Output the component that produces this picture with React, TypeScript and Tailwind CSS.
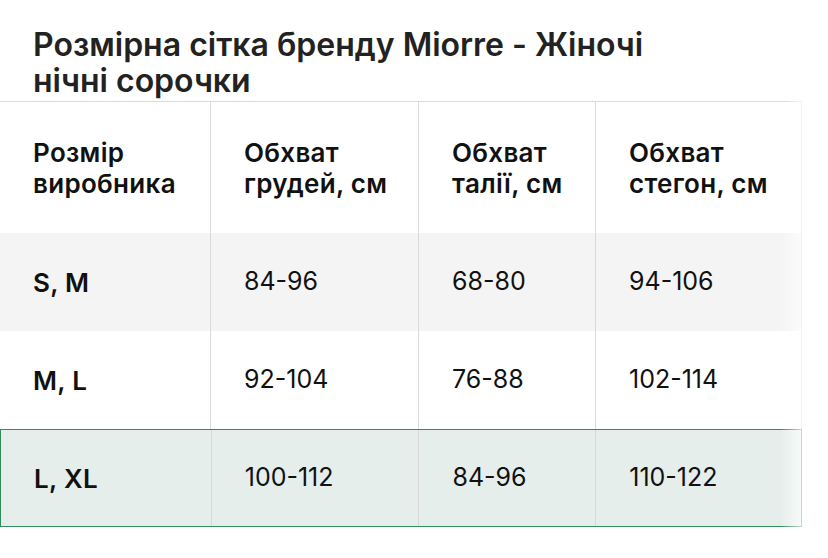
import React from "react"

const head = [
  ["Розмір", "виробника"],
  ["Обхват", "грудей, см"],
  ["Обхват", "талії, см"],
  ["Обхват", "стегон, см"],
]

const rows = [
  ["S, M", "84-96", "68-80", "94-106"],
  ["M, L", "92-104", "76-88", "102-114"],
  ["L, XL", "100-112", "84-96", "110-122"],
]

const widths = ["w-[211px]", "w-[208px]", "w-[177px]", "w-[205px]"]

export default function App() {
  return (
    <div className="min-h-[558px] w-[828px] bg-white text-[#111] font-['Inter','Noto_Sans',sans-serif]">
      <h1 className="w-[740px] px-[33px] pt-[27px] text-[32px] font-semibold leading-[36px] text-[#222]">
        Розмірна сітка бренду Miorre - Жіночі нічні сорочки
      </h1>
      <div className="relative mt-[2px] w-[802px]">
        <div className="flex h-[132px] border-t border-r border-[#d9d9d9]">
          {head.map((h, i) => (
            <div
              key={i}
              className={`${widths[i]} flex flex-col justify-center whitespace-nowrap border-r border-[#d9d9d9] px-[33px] text-[26px] font-semibold leading-[31px] tracking-[0.3px] last:border-r-0`}
            >
              <span>{h[0]}</span>
              <span>{h[1]}</span>
            </div>
          ))}
        </div>
        {rows.map((r, ri) => {
          const last = ri === rows.length - 1
          return (
            <div
              key={ri}
              className={
                last
                  ? "flex h-[98px] border border-[#2f8f5c] bg-[#e6eeeb]"
                  : ri === 0
                    ? "flex h-[98px] border-r border-[#d9d9d9] bg-[#f4f4f4]"
                    : "flex h-[98px] border-r border-[#d9d9d9] bg-white"
              }
            >
              {r.map((c, ci) => (
                <div
                  key={ci}
                  className={`${widths[ci]} flex items-center border-r border-[#d9d9d9] px-[33px] last:border-r-0 ${
                    ci === 0 ? "text-[26px] font-semibold tracking-[0.3px]" : "text-[25px] font-normal"
                  }`}
                >
                  {c}
                </div>
              ))}
            </div>
          )
        })}
        <div className="pointer-events-none absolute inset-y-0 right-0 w-[22px] bg-gradient-to-r from-white/0 to-white/70" />
      </div>
    </div>
  )
}
